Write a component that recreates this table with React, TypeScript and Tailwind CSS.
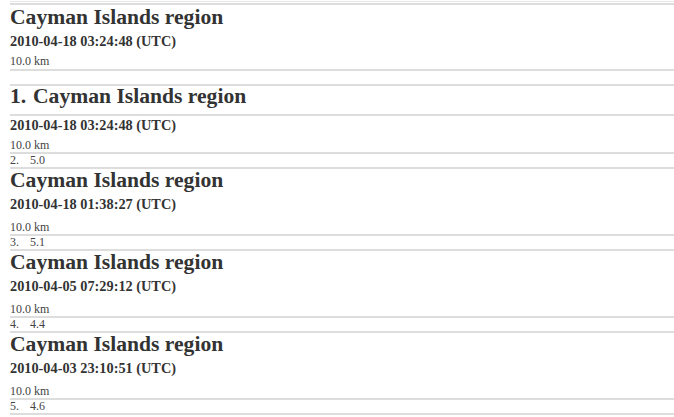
import React from "react";

const items = [
  { n: 2, date: "2010-04-18 01:38:27 (UTC)", next: "5.1" },
  { n: 3, date: "2010-04-05 07:29:12 (UTC)", next: "4.4" },
  { n: 4, date: "2010-04-03 23:10:51 (UTC)", next: "4.6" },
];

function Line() {
  return <div className="h-[2px] bg-[#dddddd]" />;
}

export default function App() {
  return (
    <div
      className="w-[674px] h-[417px] bg-white text-[#333333] pl-[10px] overflow-hidden"
      style={{ fontFamily: '"Liberation Serif", "Times New Roman", serif' }}
    >
      <div className="mt-[1px] h-[1px] bg-[#e8e8e8]" />
      <div className="mt-[1px]">
        <Line />
      </div>
      {/* detail header */}
      <div className="text-[21.6px] leading-[22px] font-bold mt-[1px]">Cayman Islands region</div>
      <div className="text-[14.3px] leading-[16px] font-bold mt-[5px]">2010-04-18 03:24:48 (UTC)</div>
      <div className="text-[12px] leading-[14px] mt-[5px] text-[#444444]">10.0 km</div>
      <div className="mt-[1px]">
        <Line />
      </div>
      <div className="h-[13px]" />
      <Line />
      {/* item 1 */}
      <div className="flex text-[21.6px] leading-[22px] font-bold -mt-[1px] mb-[7px]">
        <span className="w-[23px]">1.</span>
        <span>Cayman Islands region</span>
      </div>
      <Line />
      <div className="text-[14.3px] leading-[16px] font-bold mt-[1px]">2010-04-18 03:24:48 (UTC)</div>
      <div className="text-[12px] leading-[13px] mt-[6px] text-[#444444]">10.0 km</div>
      <Line />
      <div className="flex text-[12px] leading-[13px] text-[#444444]">
        <span className="w-[20px]">2.</span>
        <span>5.0</span>
      </div>
      <Line />
      {items.map((it) => (
        <div key={it.n}>
          <div className="text-[21.6px] leading-[22px] font-bold">Cayman Islands region</div>
          <div className="text-[14.3px] leading-[16px] font-bold mt-[5px]">{it.date}</div>
          <div className="text-[12px] leading-[14px] mt-[8px] text-[#444444]">10.0 km</div>
          <Line />
          <div className="flex text-[12px] leading-[13px] text-[#444444]">
            <span className="w-[20px]">{it.n + 1}.</span>
            <span>{it.next}</span>
          </div>
          <Line />
        </div>
      ))}
    </div>
  );
}
